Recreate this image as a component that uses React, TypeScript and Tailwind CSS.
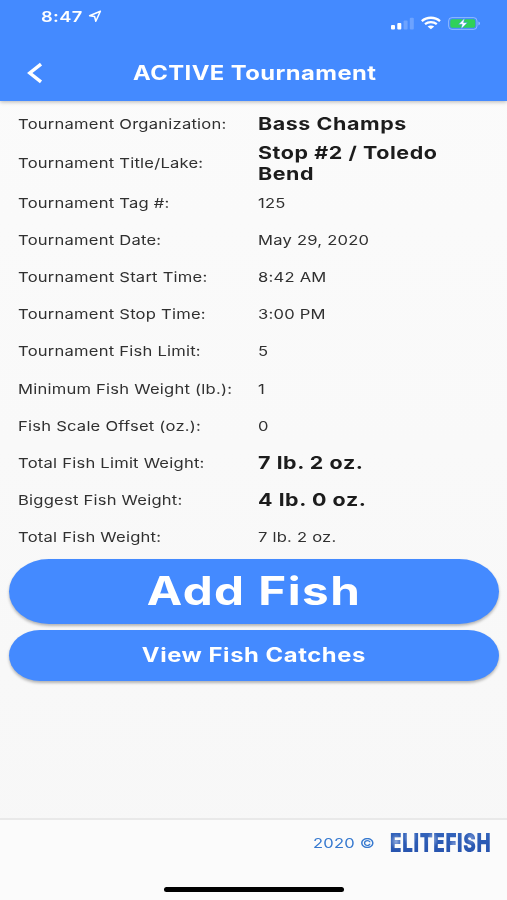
import React from "react";

type Row = { label: string; value: string; strong?: boolean; tall?: boolean };

const rows: Row[] = [
  { label: "Tournament Organization:", value: "Bass Champs", strong: true },
  { label: "Tournament Title/Lake:", value: "Stop #2 / Toledo Bend", strong: true, tall: true },
  { label: "Tournament Tag #:", value: "125" },
  { label: "Tournament Date:", value: "May 29, 2020" },
  { label: "Tournament Start Time:", value: "8:42 AM" },
  { label: "Tournament Stop Time:", value: "3:00 PM" },
  { label: "Tournament Fish Limit:", value: "5" },
  { label: "Minimum Fish Weight (lb.):", value: "1" },
  { label: "Fish Scale Offset (oz.):", value: "0" },
  { label: "Total Fish Limit Weight:", value: "7 lb. 2 oz.", strong: true },
  { label: "Biggest Fish Weight:", value: "4 lb. 0 oz.", strong: true },
  { label: "Total Fish Weight:", value: "7 lb. 2 oz." },
];

function StatusBar() {
  return (
    <div className="flex h-[46px] items-start justify-between pl-[40.5px] pr-[26px] pt-[8px] text-white">
      <div className="flex items-center">
        <span className="w-[46px] whitespace-nowrap text-[15px] font-semibold leading-[17px]">
          <span className="inline-block origin-left scale-x-[1.22] tracking-[0.3px]">8:47</span>
        </span>
        <svg width="15" height="13" viewBox="0 0 15 13" fill="none" stroke="white" strokeWidth="1.5" strokeLinejoin="round">
          <path d="M13.4 1.2 2.6 5.7 7.6 6.5 8.8 11.2Z" />
        </svg>
      </div>
      <svg width="92" height="16" viewBox="0 0 92 16" className="mt-[7px]">
        <g fill="white">
          <rect x="2" y="10" width="4" height="4.4" rx="1" />
          <rect x="8.3" y="8" width="4" height="6.4" rx="1" />
          <rect x="14.6" y="5.4" width="4" height="9" rx="1" opacity="0.22" />
          <rect x="20.8" y="2.8" width="4" height="11.6" rx="1" opacity="0.22" />
        </g>
        <g fill="none" stroke="white" strokeWidth="2.3">
          <path d="M32.8 6.2C37.8 1.6 46 1.6 51 6.2" />
          <path d="M36 9.2C39.4 6.4 44.4 6.4 47.8 9.2" />
        </g>
        <path d="M38.6 11.5C40.4 10 43.4 10 45.2 11.5L41.9 14.2Z" fill="white" />
        <rect x="59.6" y="2.6" width="28.4" height="11.8" rx="3.4" fill="none" stroke="white" strokeOpacity="0.4" />
        <rect x="61.3" y="4.2" width="25" height="8.6" rx="1.8" fill="#30d158" />
        <path d="M89.5 6.6C91.4 7.2 91.4 9.8 89.5 10.4Z" fill="white" opacity="0.5" />
        <path d="M75.5 3.3 69.6 9.3H73.2L72.1 14 78.3 7.7H74.6Z" fill="white" stroke="#448aff" strokeWidth="0.5" />
      </svg>
    </div>
  );
}

export default function App() {
  return (
    <div className="flex h-[900px] w-[507px] flex-col overflow-hidden bg-linear-to-b from-[#fbfbfb] to-[#f7f7f7] font-['Inter','Liberation_Sans',sans-serif]">
      <header className="h-[101px] shrink-0 bg-[#448aff] shadow-[0_1px_4px_rgba(0,0,0,0.28)]">
        <StatusBar />
        <div className="flex h-[54px] items-center">
          <svg className="ml-[26px] shrink-0" width="18" height="22" viewBox="0 0 18 22" fill="none" stroke="white" strokeWidth="3.4">
            <path d="M15 2.2 3.8 11 15 19.8" />
          </svg>
          <h1 className="ml-[2px] mr-[44.5px] flex-1 text-center text-[19.5px] font-bold leading-[24px] text-white">
            <span className="inline-block scale-x-[1.22] whitespace-nowrap tracking-[0.35px]">ACTIVE Tournament</span>
          </h1>
        </div>
      </header>

      <main className="flex flex-1 flex-col pt-[4.3px]">
        <dl>
          {rows.map((row) => (
            <div key={row.label} className={`flex items-center pl-[18px] ${row.tall ? "h-[42px]" : "h-[37.12px]"}`}>
              <dt className="w-[240px] shrink-0 text-[13.6px] leading-[18px] text-[#303030]">
                <span className="inline-block origin-left scale-x-[1.22] whitespace-nowrap tracking-[0.18px]">{row.label}</span>
              </dt>
              <dd
                className={
                  row.strong
                    ? "w-[160px] origin-left scale-x-[1.22] text-[17.6px] font-bold leading-[21px] tracking-[0.46px] text-[#1c1c1c]"
                    : "w-[160px] origin-left scale-x-[1.22] text-[13.6px] leading-[18px] tracking-[0.18px] text-[#303030]"
                }
              >
                {row.value}
              </dd>
            </div>
          ))}
        </dl>
        <div className="mt-[3.4px] flex flex-col gap-[6px] pl-[9px] pr-[8.5px]">
          <button className="h-[65px] rounded-[40px/32.5px] bg-[#448aff] text-[39px] font-bold leading-[46px] text-white shadow-[0_2px_3px_rgba(0,0,0,0.28)]">
            <span className="inline-block scale-x-[1.22] whitespace-nowrap pl-[1px] tracking-[1.2px]">Add Fish</span>
          </button>
          <button className="h-[51px] rounded-[31px/25.5px] bg-[#448aff] text-[19.5px] font-bold leading-[24px] text-white shadow-[0_2px_3px_rgba(0,0,0,0.28)]">
            <span className="inline-block scale-x-[1.22] whitespace-nowrap pb-[1px] tracking-[0.47px]">View Fish Catches</span>
          </button>
        </div>
      </main>

      <footer className="flex h-[82px] shrink-0 flex-col justify-between border-t-2 border-[#e9e9e9] bg-[#fbfbfb]">
        <div className="flex h-[45px] items-center pl-[313px]">
          <span className="w-[77px] shrink-0 pt-[1px] text-[13.6px] text-[#3578cf]">
            <span className="inline-block origin-left scale-x-[1.22] whitespace-nowrap tracking-[0.15px]">2020 ©</span>
          </span>
          <span className="inline-block origin-left scale-x-[0.725] whitespace-nowrap bg-[radial-gradient(circle_at_20%_30%,#a3b9e4_0px,transparent_9px),radial-gradient(circle_at_6%_45%,#8fa9dc_0px,transparent_8px),radial-gradient(circle_at_42%_38%,#8fa9dc_0px,transparent_8px),radial-gradient(circle_at_63%_55%,#7592d2_0px,transparent_7px),radial-gradient(circle_at_80%_35%,#7592d2_0px,transparent_7px),linear-gradient(#3566bd,#2450ab)] bg-clip-text text-[26px] font-black leading-[30px] tracking-[0.9px] text-transparent">
            ELITEFISH
          </span>
        </div>
        <div className="mb-[8px] ml-[164px] h-[5px] w-[180px] rounded-full bg-black" />
      </footer>
    </div>
  );
}
